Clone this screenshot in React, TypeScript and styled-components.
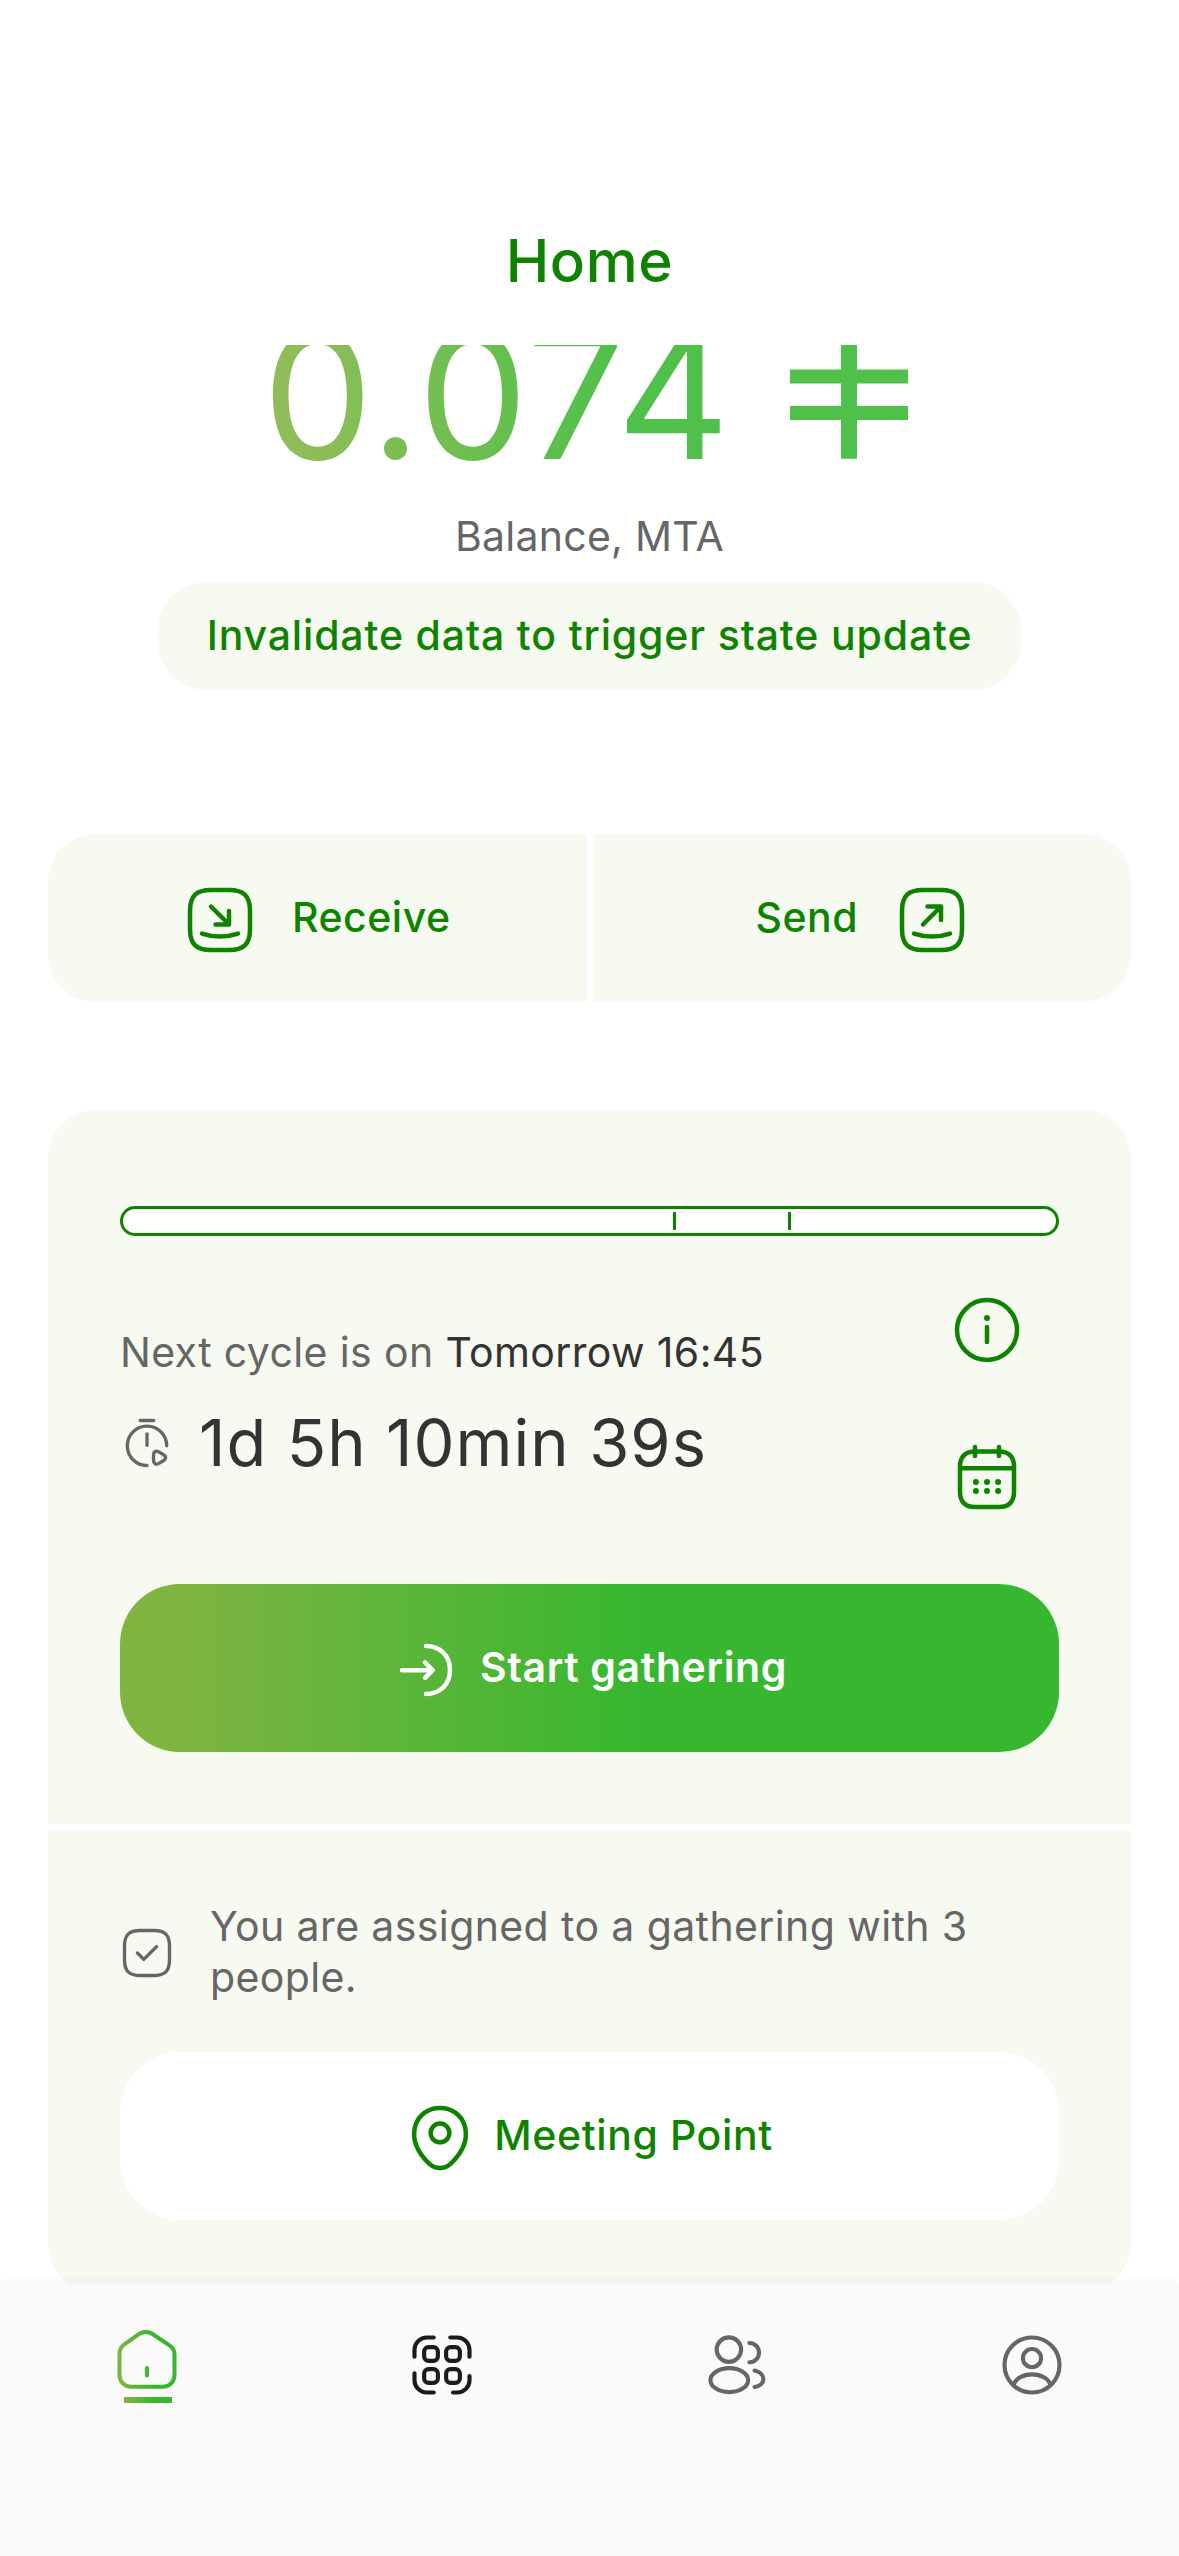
import React from 'react';
import styled, { createGlobalStyle } from 'styled-components';

const green = '#0e8300';
const tint = '#f7faf1';
const grey = '#666666';
const brand = 'linear-gradient(90deg, #80b441 6%, #36b72f 56%)';

const GlobalStyle = createGlobalStyle`
  * { box-sizing: border-box; }
  body { margin: 0; background: #ffffff; }
`;

const Screen = styled.div`
  position: relative;
  display: flex;
  flex-direction: column;
  width: 1179px;
  height: 2556px;
  overflow: hidden;
  background: #ffffff;
  font-family: Inter, 'Liberation Sans', sans-serif;
  font-size: 41px;
  line-height: 51px;
  color: ${grey};
`;

const Header = styled.header`
  flex: none;
  height: 345px;
  padding-top: 225px;
  text-align: center;
`;

const Title = styled.h1`
  margin: 0;
  font-size: 58.5px;
  line-height: 72px;
  font-weight: 500;
  letter-spacing: 0.6px;
  color: ${green};
`;

const ScrollArea = styled.main`
  flex: none;
  height: 1938px;
  overflow: hidden;
  padding: 0 48px;
`;

const Balance = styled.section`
  display: flex;
  flex-direction: column;
  align-items: center;
  height: 489px;
`;

const Amount = styled.div`
  display: flex;
  flex: none;
  gap: 59px;
  height: 150px;
  margin: -25px 8px 0 0;
  opacity: 0.87;
`;

const Digits = styled.span`
  font-size: 175px;
  line-height: 150px;
  letter-spacing: 1.6px;
  color: transparent;
  background: linear-gradient(90deg, #80b441 6%, #36b72f 76%);
  background-clip: text;
  -webkit-background-clip: text;
`;

const CurrencySign = styled.svg`
  width: 118px;
  height: 139px;
  fill: #36b72f;
`;

const BalanceLabel = styled.div`
  margin-top: 41px;
  height: 51px;
  letter-spacing: 0.25px;
`;

const Pill = styled.button`
  width: 863px;
  height: 108px;
  margin-top: 20px;
  padding: 0 0 2px;
  border: 0;
  border-radius: 48px;
  background: ${tint};
  color: ${green};
  font: inherit;
  font-weight: 500;
  letter-spacing: 0.85px;
`;

const Actions = styled.div`
  display: flex;
  gap: 6px;
  height: 168px;
  border-radius: 48px;
  overflow: hidden;
`;

const Action = styled.button<{ $gap: number }>`
  display: flex;
  flex: 1;
  align-items: center;
  justify-content: center;
  gap: ${(p) => p.$gap}px;
  padding: 3px 0 0;
  border: 0;
  background: ${tint};
  color: ${green};
  font: inherit;
  font-weight: 500;
  letter-spacing: 0.5px;
`;

const Label = styled.span`
  padding-bottom: 5px;
`;

const Card = styled.section`
  display: flex;
  flex-direction: column;
  gap: 6px;
  margin-top: 108px;
  border-radius: 48px;
  overflow: hidden;
`;

const CycleSection = styled.div`
  height: 714px;
  padding: 96px 72px 0;
  background: ${tint};
`;

const Progress = styled.div`
  display: grid;
  grid-template-columns: 550px 115px 1fr;
  height: 30px;
  padding: 3px;
  border: 3px solid ${green};
  border-radius: 15px;
  background: #ffffff;
`;

const Segment = styled.div<{ $tick?: boolean }>`
  border-right: ${(p) => (p.$tick ? `3px solid ${green}` : '0')};
`;

const CycleRow = styled.div`
  display: flex;
  justify-content: space-between;
  height: 348px;
  padding-right: 36px;
`;

const CycleInfo = styled.div`
  padding-top: 91px;
`;

const NextCycle = styled.div`
  letter-spacing: 0.37px;
`;

const Strong = styled.span`
  color: #333333;
`;

const Countdown = styled.div`
  display: flex;
  align-items: center;
  gap: 25px;
  height: 80px;
  margin-top: 25px;
  font-size: 65px;
  line-height: 80px;
  letter-spacing: 1.05px;
  color: #333333;
`;

const IconColumn = styled.div`
  display: flex;
  flex-direction: column;
  gap: 75px;
  padding-top: 58px;
  color: ${green};
`;

const WideButton = styled.button<{ $primary?: boolean }>`
  display: flex;
  align-items: center;
  justify-content: center;
  gap: 18px;
  width: 100%;
  height: 168px;
  padding: 3px 2px 0 0;
  border: 0;
  border-radius: 60px;
  background: ${(p) => (p.$primary ? brand : '#ffffff')};
  color: ${(p) => (p.$primary ? '#ffffff' : green)};
  font: inherit;
  font-weight: ${(p) => (p.$primary ? 600 : 500)};
  letter-spacing: 0.6px;
`;

const MeetingSection = styled.div`
  height: 462px;
  padding: 72px 72px 0;
  background: ${tint};
`;

const Assignment = styled.div`
  display: flex;
  align-items: center;
  gap: 36px;
  height: 102px;
  margin-bottom: 48px;
  letter-spacing: 0.39px;
`;

const AssignmentText = styled.span`
  padding-bottom: 2px;
`;

const Glyph = styled.svg<{ $size: number; $color?: string }>`
  flex: none;
  display: block;
  width: ${(p) => p.$size}px;
  height: ${(p) => p.$size}px;
  fill: none;
  stroke: currentColor;
  stroke-width: 1.5;
  stroke-linecap: round;
  stroke-linejoin: round;
  color: ${(p) => p.$color ?? 'inherit'};
`;

const TabBar = styled.nav`
  position: absolute;
  left: 0;
  right: 0;
  bottom: 0;
  display: grid;
  grid-template-columns: repeat(4, 1fr);
  height: 273px;
  background: #fafafa;
  box-shadow: 0 0 10px rgba(0, 0, 0, 0.06);
`;

const Tab = styled.a<{ $top: number }>`
  display: flex;
  flex-direction: column;
  align-items: center;
  padding-top: ${(p) => p.$top}px;
`;

const ActiveMark = styled.div`
  width: 48px;
  height: 6px;
  margin: 7px 0 0 1px;
  background: linear-gradient(90deg, #80b441 6%, #36b72f 60%);
`;

const HomeGlyph = styled.svg`
  display: block;
  width: 60px;
  height: 60px;
  fill: none;
  stroke-width: 4;
  stroke-linecap: round;
  stroke-linejoin: round;
`;

type IconProps = { size?: number; color?: string; children: React.ReactNode };
const Icon = ({ size = 72, color, children }: IconProps) => (
  <Glyph $size={size} $color={color} viewBox="0 0 24 24">
    {children}
  </Glyph>
);

const Squircle = () => <path d="M9 22h6c5 0 7-2 7-7V9c0-5-2-7-7-7H9C4 2 2 4 2 9v6c0 5 2 7 7 7z" />;

export default function App() {
  return (
    <Screen>
      <GlobalStyle />
      <Header>
        <Title>Home</Title>
      </Header>
      <ScrollArea>
        <Balance>
          <Amount>
            <Digits>0.074</Digits>
            <CurrencySign viewBox="0 0 118 139" role="img" aria-label="MTA">
              <path d="M51 12h16v37.5h51v14H67v22.5h51v14H67V138.7H51V100H0V86h51V63.500H0v-14h51z" />
            </CurrencySign>
          </Amount>
          <BalanceLabel>Balance, MTA</BalanceLabel>
          <Pill>Invalidate data to trigger state update</Pill>
        </Balance>
        <Actions>
          <Action $gap={36}>
            <Icon>
              <Squircle />
              <path d="M9 7.51l6 6M10.5 13.51H15v-4.5M6 16.51c3.89 1.3 8.11 1.3 12 0" />
            </Icon>
            <Label>Receive</Label>
          </Action>
          <Action $gap={38}>
            <Label>Send</Label>
            <Icon>
              <Squircle />
              <path d="M9 13.51l6-6M10.5 7.51H15v4.5M6 16.51c3.89 1.3 8.11 1.3 12 0" />
            </Icon>
          </Action>
        </Actions>
        <Card>
          <CycleSection>
            <Progress>
              <Segment $tick />
              <Segment $tick />
              <Segment />
            </Progress>
            <CycleRow>
              <CycleInfo>
                <NextCycle>
                  Next cycle is on <Strong>Tomorrow 16:45</Strong>
                </NextCycle>
                <Countdown>
                  <Icon size={54} color={grey}>
                    <path d="M12 8v5M9 2h6M12 22a8.75 8.75 0 1 1 8.75-8.75" />
                    <path d="M14.9 18.5v-1.2c0-1.49 1.05-2.09 2.34-1.35l1.04.6 1.04.6c1.29.74 1.29 1.96 0 2.7l-1.04.6-1.04.6c-1.29.74-2.34.14-2.34-1.35v-1.2z" />
                  </Icon>
                  <span>1d 5h 10min 39s</span>
                </Countdown>
              </CycleInfo>
              <IconColumn>
                <Icon>
                  <circle cx="12" cy="12" r="10" />
                  <path d="M12 16v-5" />
                  <path d="M11.995 8h.009" strokeWidth="2" />
                </Icon>
                <Icon>
                  <path d="M8 2v3M16 2v3M3.5 9.09h17M21 8.5V17c0 3-1.5 5-5 5H8c-3.5 0-5-2-5-5V8.5c0-3 1.5-5 5-5h8c3.5 0 5 2 5 5z" />
                  <path
                    d="M15.695 13.7h.009M15.695 16.7h.009M11.995 13.7h.01M11.995 16.7h.01M8.294 13.7h.01M8.294 16.7h.01"
                    strokeWidth="2"
                  />
                </Icon>
              </IconColumn>
            </CycleRow>
            <WideButton $primary>
              <Icon>
                <path d="M11.68 14.62l2.56-2.56-2.56-2.56M4 12.06h10.17M12 4c4.42 0 8 3 8 8s-3.58 8-8 8" />
              </Icon>
              <Label>Start gathering</Label>
            </WideButton>
          </CycleSection>
          <MeetingSection>
            <Assignment>
              <Icon size={54}>
                <Squircle />
                <path d="M7.75 12l2.83 2.83 5.67-5.66" />
              </Icon>
              <AssignmentText>You are assigned to a gathering with 3 people.</AssignmentText>
            </Assignment>
            <WideButton>
              <Icon>
                <path d="M12 13.43a3.12 3.12 0 100-6.24 3.12 3.12 0 000 6.24z" />
                <path d="M3.62 8.49c1.97-8.66 14.8-8.65 16.76.01 1.15 5.08-2.01 9.38-4.78 12.04a5.193 5.193 0 01-7.21 0c-2.76-2.66-5.92-6.97-4.77-12.05z" />
              </Icon>
              <Label>Meeting Point</Label>
            </WideButton>
          </MeetingSection>
        </Card>
      </ScrollArea>
      <TabBar>
        <Tab $top={47}>
          <HomeGlyph viewBox="0 0 60 60">
            <defs>
              <linearGradient id="home" gradientUnits="userSpaceOnUse" x1="4" y1="0" x2="36" y2="0">
                <stop offset="0" stopColor="#7bb441" />
                <stop offset="1" stopColor="#36b72f" />
              </linearGradient>
            </defs>
            <g stroke="url(#home)">
              <path d="M2.5 24C2.5 20 4 17 7 14.7L22 4C26.5 1.2 31 1.2 35.5 4L52.5 15.3C55.8 17.6 57.5 21 57.5 24.5V45C57.5 51.5 52.5 56.8 46 56.8H14C7.5 56.8 2.5 51.5 2.5 45z" />
              <path d="M29.9 38V45.5L30 45.5V38z" />
            </g>
          </HomeGlyph>
          <ActiveMark />
        </Tab>
        <Tab $top={49}>
          <Icon size={66} color="#1b1c18">
            <path d="M2 9V6.5C2 4.01 4.01 2 6.5 2H9M15 2h2.5C19.99 2 22 4.01 22 6.5V9M22 16v1.5c0 2.49-2.01 4.5-4.5 4.5H16M9 22H6.5C4.01 22 2 19.99 2 17.5V15" />
            <rect x="5.5" y="5.5" width="5" height="5" rx="1.6" />
            <rect x="13.5" y="5.5" width="5" height="5" rx="1.6" />
            <rect x="5.5" y="13.5" width="5" height="5" rx="1.6" />
            <rect x="13.5" y="13.5" width="5" height="5" rx="1.6" />
          </Icon>
        </Tab>
        <Tab $top={49}>
          <Icon size={66}>
            <circle cx="9.05" cy="6.4" r="4.45" />
            <ellipse cx="9.2" cy="17.5" rx="6.85" ry="4.35" />
            <path d="M16.5 4a3.5 3.5 0 0 1 0 7M18.4 14C20.3 14.4 21.6 15.6 21.6 17.1S20.3 19.7 18.4 20" />
          </Icon>
        </Tab>
        <Tab $top={49}>
          <Icon size={66}>
            <circle cx="12" cy="12" r="10" />
            <circle cx="12" cy="9.5" r="3.3" />
            <path d="M5.3 19.2C6 17 8.7 15.4 12 15.4S18 17 18.7 19.2" />
          </Icon>
        </Tab>
      </TabBar>
    </Screen>
  );
}
